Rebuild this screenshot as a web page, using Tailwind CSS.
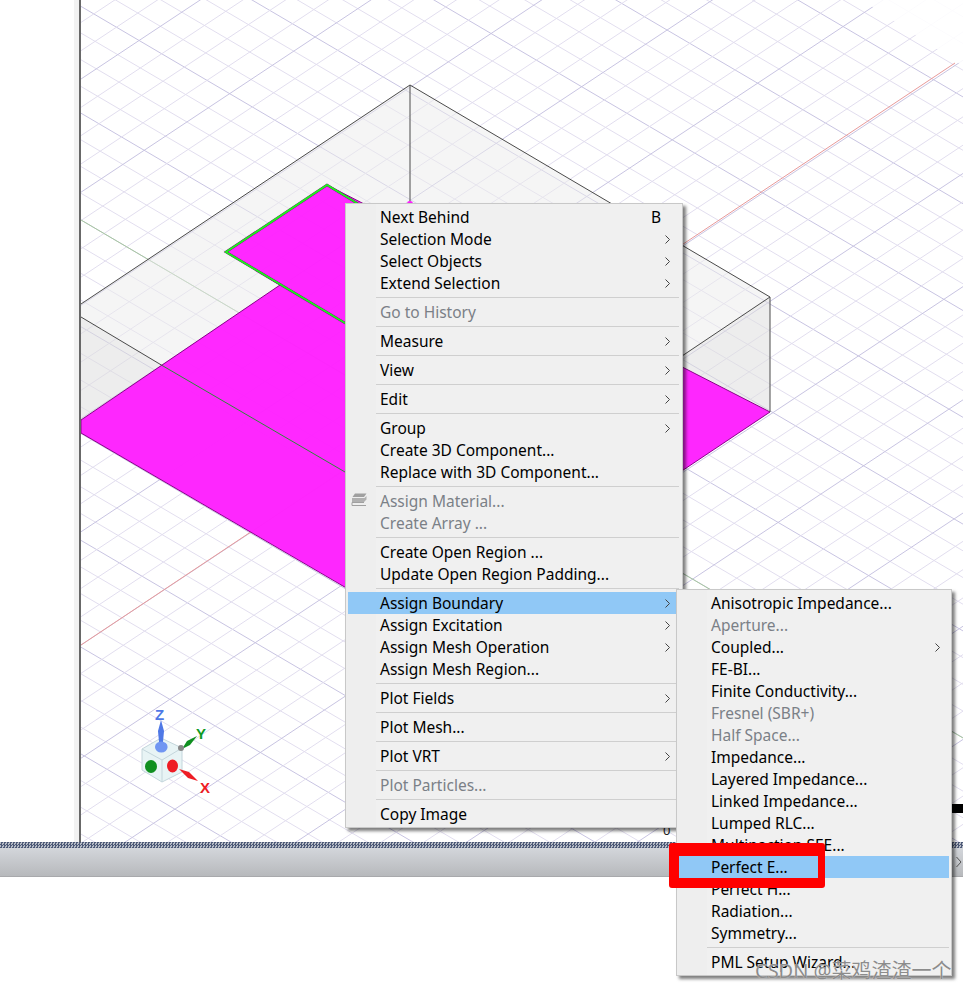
<!DOCTYPE html>
<html lang="en">

<head>
    <meta charset="UTF-8">
    <meta name="viewport" content="width=device-width, initial-scale=1.0">
    <title>Assign Boundary menu</title>
    <script src="https://cdn.jsdelivr.net/npm/@tailwindcss/browser@4"></script>
</head>

<body class="relative h-[990px] w-[963px] overflow-hidden bg-white font-['Noto_Sans','Noto_Sans_CJK_SC',sans-serif] text-[15.5px] text-black">
    <!-- modeler window -->
    <div class="flex h-[842px]">
        <div class="w-[74px] bg-white"></div>
        <div class="w-[5px] bg-[#f2f2f2]"></div>
        <div class="w-[2px] bg-[#686868]"></div>
        <div class="relative flex-1 overflow-hidden bg-white">
            <svg class="h-[842px] w-[882px]" viewBox="81 0 882 842" xmlns="http://www.w3.org/2000/svg">
                <g id="grid" stroke-width="1"></g>
                <polygon points="862,0 963,0 963,66" fill="#fff" fill-opacity="0.88" />
                <!-- axes -->
                <line x1="81" y1="645" x2="955" y2="63" stroke="#e89a9a" stroke-width="1" />
                <line x1="81" y1="220" x2="963" y2="738" stroke="#a9c9a0" stroke-width="1" />
                <!-- box faces -->
                <polygon points="410,85 770,297 431,522 81,317 81,304" fill="#ebebeb" fill-opacity="0.5" />
                <polygon points="81,317 431,522 431,636 81,433" fill="#dedede" fill-opacity="0.55" />
                <polygon points="770,297 770,412 431,636 431,522" fill="#dedede" fill-opacity="0.55" />
                <!-- sheet -->
                <polygon points="81,433 81,420 280,285 226,252 327,185 770,412 432,638" fill="#ff1cff" fill-opacity="0.95" stroke="#8a008a" stroke-width="1" />
                <!-- box edges -->
                <g stroke="#4a4a4a" stroke-width="1" fill="none">
                    <polyline points="81,304 410,85 770,297 770,412" />
                    <line x1="410" y1="85" x2="410" y2="203" />
                    <line x1="770" y1="297" x2="682" y2="356" />
                    <line x1="81" y1="317" x2="163" y2="366" />
                </g>
                <line x1="163" y1="366" x2="345" y2="472" stroke="#2f8a3a" stroke-width="1" />
                <circle cx="410" cy="204" r="3" fill="#ff1cff" />
                <polyline points="360,205 327,185 226,252 350,326" fill="none" stroke="#7a007a" stroke-width="2.5" />
                <polyline points="360,205 327,185 226,252 350,326" fill="none" stroke="#1ef01e" stroke-width="2" />
                <!-- orientation gizmo -->
                <polygon points="142,749 161,738 182,748 182,772 162,782 142,770" fill="#e8f4f5" stroke="#c4d6dc" />
                <polyline points="142,749 162,760 182,748" fill="none" stroke="#c4d6dc" />
                <line x1="162" y1="760" x2="162" y2="782" stroke="#c4d6dc" />
                <polygon points="161,720 164,731 163,742 159,742 158,731" fill="#4f78e6" />
                <ellipse cx="161.3" cy="747" rx="6.3" ry="5.5" fill="#7096f2" />
                <text x="155" y="720" font-family="Liberation Sans" font-weight="700" font-size="15" fill="#4f78e6">Z</text>
                <polygon points="197,736 190,745 182,749 187,741" fill="#0f8f1f" />
                <circle cx="181" cy="748" r="3" fill="#888" />
                <text x="196" y="739" font-family="Liberation Sans" font-weight="700" font-size="15" fill="#0f9a1f">Y</text>
                <ellipse cx="151" cy="766.5" rx="6" ry="6.5" fill="#0f8f1f" />
                <ellipse cx="172.5" cy="766" rx="5.5" ry="6.5" fill="#ee1c24" />
                <polygon points="179,769 189,772 198,781 188,778" fill="#ee1c24" />
                <text x="200" y="793" font-family="Liberation Sans" font-weight="700" font-size="15" fill="#ee1c24">X</text>
            </svg>
            <span class="absolute left-[582px] top-[821px] text-[13px] leading-[18px] text-[#222]">0</span>
            <div class="absolute left-[871px] top-[804px] h-[9px] w-[11px] bg-black"></div>
        </div>
    </div>

    <!-- message bar below the modeler -->
    <div class="h-[6px] bg-[#8a93a5] bg-[repeating-conic-gradient(#4e5a78_0_25%,#b6bcc6_0_50%)] bg-[length:3px_3px]"></div>
    <div class="flex h-[29px] items-center justify-end border-b border-[#a8a9ac] bg-gradient-to-b from-[#d3d6db] to-[#b7b9bc] pr-[1px]">
        <svg class="h-[12px] w-[6px]" viewBox="0 0 6 12"><path d="M0.5 1 L5 6 L0.5 11" fill="none" stroke="#555" stroke-width="1" /></svg>
    </div>

    <!-- context menu -->
    <div class="absolute left-[345px] top-[203px] h-[625px] w-[338px] border border-[#c8c8c8] bg-[#f0f0f0] px-[2px] py-[2px] shadow-[3px_3px_3px_rgba(0,0,0,0.5)]">
        <div class="absolute bottom-0 left-0 top-0 w-[30px] bg-[#eeeeee]"></div>
        <div class="relative leading-[22px]">
            <div class="flex h-[22px] items-center justify-between pl-[32px] pr-[19px]"><span>Next Behind</span><span>B</span></div>
            <div class="flex h-[22px] items-center justify-between pl-[32px] pr-[10px]"><span>Selection Mode</span><svg class="h-[9px] w-[5px]" viewBox="0 0 5 9"><path d="M0.5 0.5 L4.5 4.5 L0.5 8.5" fill="none" stroke="#444" /></svg></div>
            <div class="flex h-[22px] items-center justify-between pl-[32px] pr-[10px]"><span>Select Objects</span><svg class="h-[9px] w-[5px]" viewBox="0 0 5 9"><path d="M0.5 0.5 L4.5 4.5 L0.5 8.5" fill="none" stroke="#444" /></svg></div>
            <div class="flex h-[22px] items-center justify-between pl-[32px] pr-[10px]"><span>Extend Selection</span><svg class="h-[9px] w-[5px]" viewBox="0 0 5 9"><path d="M0.5 0.5 L4.5 4.5 L0.5 8.5" fill="none" stroke="#444" /></svg></div>
            <div class="ml-[28px] mr-[1px] flex h-[7px] items-center"><div class="h-px w-full bg-[#cfcfcf]"></div></div>
            <div class="flex h-[22px] items-center pl-[32px] text-[#7b8087]">Go to History</div>
            <div class="ml-[28px] mr-[1px] flex h-[7px] items-center"><div class="h-px w-full bg-[#cfcfcf]"></div></div>
            <div class="flex h-[22px] items-center justify-between pl-[32px] pr-[10px]"><span>Measure</span><svg class="h-[9px] w-[5px]" viewBox="0 0 5 9"><path d="M0.5 0.5 L4.5 4.5 L0.5 8.5" fill="none" stroke="#444" /></svg></div>
            <div class="ml-[28px] mr-[1px] flex h-[7px] items-center"><div class="h-px w-full bg-[#cfcfcf]"></div></div>
            <div class="flex h-[22px] items-center justify-between pl-[32px] pr-[10px]"><span>View</span><svg class="h-[9px] w-[5px]" viewBox="0 0 5 9"><path d="M0.5 0.5 L4.5 4.5 L0.5 8.5" fill="none" stroke="#444" /></svg></div>
            <div class="ml-[28px] mr-[1px] flex h-[7px] items-center"><div class="h-px w-full bg-[#cfcfcf]"></div></div>
            <div class="flex h-[22px] items-center justify-between pl-[32px] pr-[10px]"><span>Edit</span><svg class="h-[9px] w-[5px]" viewBox="0 0 5 9"><path d="M0.5 0.5 L4.5 4.5 L0.5 8.5" fill="none" stroke="#444" /></svg></div>
            <div class="ml-[28px] mr-[1px] flex h-[7px] items-center"><div class="h-px w-full bg-[#cfcfcf]"></div></div>
            <div class="flex h-[22px] items-center justify-between pl-[32px] pr-[10px]"><span>Group</span><svg class="h-[9px] w-[5px]" viewBox="0 0 5 9"><path d="M0.5 0.5 L4.5 4.5 L0.5 8.5" fill="none" stroke="#444" /></svg></div>
            <div class="flex h-[22px] items-center pl-[32px]">Create 3D Component...</div>
            <div class="flex h-[22px] items-center pl-[32px]">Replace with 3D Component...</div>
            <div class="ml-[28px] mr-[1px] flex h-[7px] items-center"><div class="h-px w-full bg-[#cfcfcf]"></div></div>
            <div class="relative flex h-[22px] items-center pl-[32px] text-[#7b8087]">
                <svg class="absolute left-[3px] top-[3px] h-[13px] w-[16px]" viewBox="0 0 16 13">
                    <path d="M4 0.5 H15.5 L13 4 H1.5 Z" fill="#a0a0a0" />
                    <path d="M1 5 H13.5 L15.5 3 V6.5 L13 9 H1 Z" fill="#b0b0b0" />
                    <path d="M1 9.5 V12.5 H15 M1 9.5 H13" fill="none" stroke="#a0a0a0" />
                </svg>
                Assign Material...
            </div>
            <div class="flex h-[22px] items-center pl-[32px] text-[#7b8087]">Create Array ...</div>
            <div class="ml-[28px] mr-[1px] flex h-[7px] items-center"><div class="h-px w-full bg-[#cfcfcf]"></div></div>
            <div class="flex h-[22px] items-center pl-[32px]">Create Open Region ...</div>
            <div class="flex h-[22px] items-center pl-[32px]">Update Open Region Padding...</div>
            <div class="ml-[28px] mr-[1px] flex h-[7px] items-center"><div class="h-px w-full bg-[#cfcfcf]"></div></div>
            <div class="flex h-[22px] items-center justify-between bg-[#90c8f6] pl-[32px] pr-[10px]"><span>Assign Boundary</span><svg class="h-[9px] w-[5px]" viewBox="0 0 5 9"><path d="M0.5 0.5 L4.5 4.5 L0.5 8.5" fill="none" stroke="#444" /></svg></div>
            <div class="flex h-[22px] items-center justify-between pl-[32px] pr-[10px]"><span>Assign Excitation</span><svg class="h-[9px] w-[5px]" viewBox="0 0 5 9"><path d="M0.5 0.5 L4.5 4.5 L0.5 8.5" fill="none" stroke="#444" /></svg></div>
            <div class="flex h-[22px] items-center justify-between pl-[32px] pr-[10px]"><span>Assign Mesh Operation</span><svg class="h-[9px] w-[5px]" viewBox="0 0 5 9"><path d="M0.5 0.5 L4.5 4.5 L0.5 8.5" fill="none" stroke="#444" /></svg></div>
            <div class="flex h-[22px] items-center pl-[32px]">Assign Mesh Region...</div>
            <div class="ml-[28px] mr-[1px] flex h-[7px] items-center"><div class="h-px w-full bg-[#cfcfcf]"></div></div>
            <div class="flex h-[22px] items-center justify-between pl-[32px] pr-[10px]"><span>Plot Fields</span><svg class="h-[9px] w-[5px]" viewBox="0 0 5 9"><path d="M0.5 0.5 L4.5 4.5 L0.5 8.5" fill="none" stroke="#444" /></svg></div>
            <div class="ml-[28px] mr-[1px] flex h-[7px] items-center"><div class="h-px w-full bg-[#cfcfcf]"></div></div>
            <div class="flex h-[22px] items-center pl-[32px]">Plot Mesh...</div>
            <div class="ml-[28px] mr-[1px] flex h-[7px] items-center"><div class="h-px w-full bg-[#cfcfcf]"></div></div>
            <div class="flex h-[22px] items-center justify-between pl-[32px] pr-[10px]"><span>Plot VRT</span><svg class="h-[9px] w-[5px]" viewBox="0 0 5 9"><path d="M0.5 0.5 L4.5 4.5 L0.5 8.5" fill="none" stroke="#444" /></svg></div>
            <div class="ml-[28px] mr-[1px] flex h-[7px] items-center"><div class="h-px w-full bg-[#cfcfcf]"></div></div>
            <div class="flex h-[22px] items-center pl-[32px] text-[#7b8087]">Plot Particles...</div>
            <div class="ml-[28px] mr-[1px] flex h-[7px] items-center"><div class="h-px w-full bg-[#cfcfcf]"></div></div>
            <div class="flex h-[22px] items-center pl-[32px]">Copy Image</div>
        </div>
    </div>

    <!-- Assign Boundary submenu -->
    <div class="absolute left-[676px] top-[589px] h-[387px] w-[276px] border border-[#c8c8c8] bg-[#f0f0f0] p-[2px] shadow-[3px_3px_3px_rgba(0,0,0,0.5)]">
        <div class="absolute bottom-0 left-0 top-0 w-[30px] bg-[#eeeeee]"></div>
        <div class="relative leading-[22px]">
            <div class="flex h-[22px] items-center pl-[32px]">Anisotropic Impedance...</div>
            <div class="flex h-[22px] items-center pl-[32px] text-[#7b8087]">Aperture...</div>
            <div class="flex h-[22px] items-center justify-between pl-[32px] pr-[9px]"><span>Coupled...</span><svg class="h-[9px] w-[5px]" viewBox="0 0 5 9"><path d="M0.5 0.5 L4.5 4.5 L0.5 8.5" fill="none" stroke="#444" /></svg></div>
            <div class="flex h-[22px] items-center pl-[32px]">FE-BI...</div>
            <div class="flex h-[22px] items-center pl-[32px]">Finite Conductivity...</div>
            <div class="flex h-[22px] items-center pl-[32px] text-[#7b8087]">Fresnel (SBR+)</div>
            <div class="flex h-[22px] items-center pl-[32px] text-[#7b8087]">Half Space...</div>
            <div class="flex h-[22px] items-center pl-[32px]">Impedance...</div>
            <div class="flex h-[22px] items-center pl-[32px]">Layered Impedance...</div>
            <div class="flex h-[22px] items-center pl-[32px]">Linked Impedance...</div>
            <div class="flex h-[22px] items-center pl-[32px]">Lumped RLC...</div>
            <div class="flex h-[22px] items-center pl-[32px]">Multipaction SEE...</div>
            <div class="flex h-[22px] items-center bg-[#90c8f6] pl-[32px]">Perfect E...</div>
            <div class="flex h-[22px] items-center pl-[32px]">Perfect H...</div>
            <div class="flex h-[22px] items-center pl-[32px]">Radiation...</div>
            <div class="flex h-[22px] items-center pl-[32px]">Symmetry...</div>
            <div class="ml-[28px] flex h-[7px] items-center"><div class="h-px w-full bg-[#cfcfcf]"></div></div>
            <div class="flex h-[22px] items-center pl-[32px]">PML Setup Wizard...</div>
        </div>
    </div>

    <!-- red annotation box -->
    <div class="absolute left-[669px] top-[843px] h-[45px] w-[156px] rounded-[3px] border-t-[13px] border-r-[7px] border-b-[10px] border-l-[10px] border-[#ff0000]"></div>

    <!-- watermark -->
    <div class="absolute left-[755px] top-[957px] text-[20px] leading-[28px] text-[#8c8c8c] [text-shadow:0_0_1px_rgba(255,255,255,0.8)]">CSDN @菜鸡渣渣一个</div>

    <script>
        // isometric floor grid, every 4th line is a major one
        const grid = document.querySelector("#grid");
        function addLine(x1, y1, x2, y2, major) {
            const line = document.createElementNS("http://www.w3.org/2000/svg", "line");
            line.setAttribute("x1", x1);
            line.setAttribute("y1", y1);
            line.setAttribute("x2", x2);
            line.setAttribute("y2", y2);
            line.setAttribute("stroke", major ? "#c8c4e2" : "#e2deef");
            grid.appendChild(line);
        }
        for (let k = -40; k <= 40; k++) {
            const y = 220 + k * 26.7;
            addLine(81, y, 963, y + 0.587 * 882, k % 4 === 0);
        }
        for (let k = -40; k <= 40; k++) {
            const y = 645 + k * 28.3;
            addLine(81, y, 963, y - 0.663 * 882, k % 4 === 0);
        }
    </script>
</body>

</html>
